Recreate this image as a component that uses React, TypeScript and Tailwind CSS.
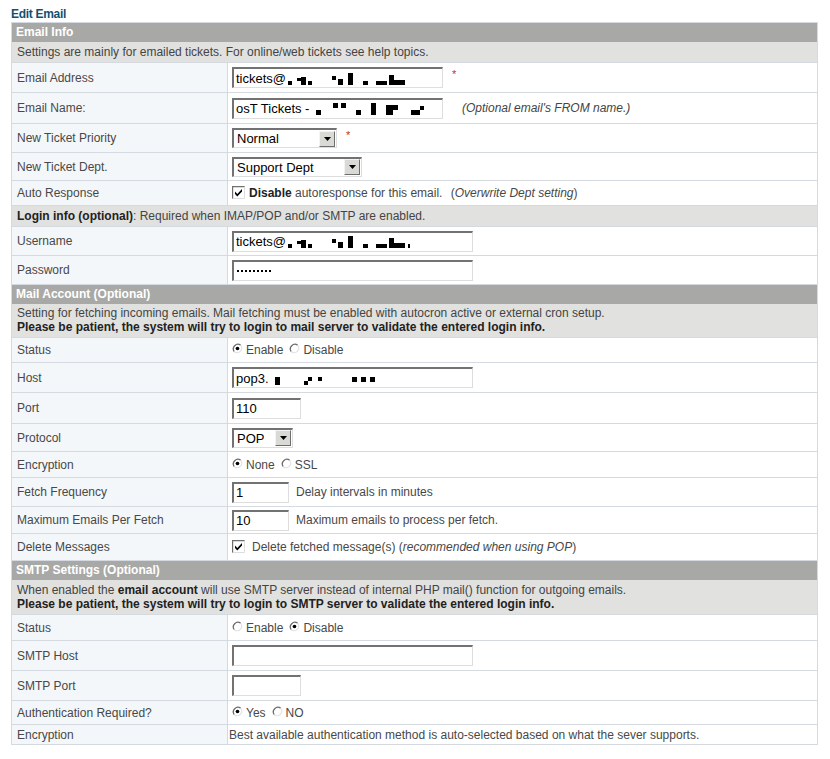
import React from 'react';

const font = "font-['Liberation_Sans',Arial,sans-serif]";

function Blocks({ items }: { items: string[] }) {
  return (
    <span className="inline-flex items-end h-[13px] ml-[1px]">
      {items.map((c, i) => (
        <span key={i} className={'inline-block bg-black ' + c} />
      ))}
    </span>
  );
}

function Input({ w, children }: { w: string; children?: React.ReactNode }) {
  return (
    <div
      className={`${w} h-[21px] flex items-center pl-[2px] bg-white border-t-2 border-l-2 border-b border-r border-t-[#727272] border-l-[#727272] border-b-[#dedede] border-r-[#dedede] text-[13px] text-black leading-none overflow-hidden whitespace-nowrap`}
    >
      {children}
    </div>
  );
}

function Select({ w, value }: { w: string; value: string }) {
  return (
    <div
      className={`${w} h-[20px] flex items-center justify-between bg-white border-t-2 border-l-2 border-b border-r border-t-[#727272] border-l-[#727272] border-b-[#dedede] border-r-[#dedede] text-[13px] text-black leading-none`}
    >
      <span className="pl-[3px]">{value}</span>
      <span className="w-[16px] h-[16px] mr-[1px] flex items-center justify-center bg-[#d9d9d6] border border-t-[#f4f4f4] border-l-[#f4f4f4] border-b-[#6e6e6e] border-r-[#6e6e6e]">
        <svg width="7" height="4" viewBox="0 0 7 4">
          <path d="M0 0h7L3.5 4z" fill="#000" />
        </svg>
      </span>
    </div>
  );
}

function Radio({ on }: { on?: boolean }) {
  return (
    <svg width="11" height="11" viewBox="0 0 12 12" className="inline-block mr-[3px] -mt-[3px]">
      <circle cx="6" cy="6" r="5" fill="#fff" />
      <path d="M9.5 2.5 A5 5 0 0 0 2.5 9.5" stroke="#6b6b6b" strokeWidth="1.4" fill="none" />
      <path d="M9.5 2.5 A5 5 0 0 1 2.5 9.5" stroke="#e2e2e2" strokeWidth="1.2" fill="none" />
      {on && <circle cx="6" cy="6" r="2" fill="#000" />}
    </svg>
  );
}

function Check() {
  return (
    <svg width="13" height="13" viewBox="0 0 13 13" className="inline-block mr-[4px] -mt-[2px]">
      <rect x="0" y="0" width="13" height="13" fill="#fff" />
      <path d="M0.5 13V0.5H13" stroke="#6f6f6f" strokeWidth="1.4" fill="none" />
      <path d="M12.5 0.5V12.5H0.5" stroke="#dedede" strokeWidth="1" fill="none" />
      <path d="M3 5.5l2.3 2.4L10 3v2.6L5.3 10.4 3 8z" fill="#000" />
    </svg>
  );
}

function Req() {
  return <span className="ml-[9px] text-[#c43030] text-[11px] -mt-[6px]">*</span>;
}

function Header({ title }: { title: string }) {
  return (
    <tr className="h-[19px] bg-[#a8a9a6]">
      <td colSpan={2} className="px-[4px] text-[12px] font-bold text-white leading-none">
        {title}
      </td>
    </tr>
  );
}

function Desc({ h, children }: { h: string; children: React.ReactNode }) {
  return (
    <tr className={`${h} bg-[#e1e1df]`}>
      <td colSpan={2} className="px-[5px] text-[12px] text-[#444] leading-[14px] border-b border-[#d4dae0]">
        {children}
      </td>
    </tr>
  );
}

function Row({ label, h, children }: { label: string; h: string; children: React.ReactNode }) {
  return (
    <tr className={h}>
      <td className="w-[216px] pl-[5px] bg-[#f4f7fa] border-r border-b border-[#d4dae0] text-[12px] text-[#484848]">
        {label}
      </td>
      <td className="pl-[4px] border-b border-[#d4dae0] text-[12px] text-[#484848]">
        <div className="flex items-center">{children}</div>
      </td>
    </tr>
  );
}

const emailBlocks = [
  'w-[4px] h-[4px] ml-[1px]',
  'w-[4px] h-[3px] ml-[5px] mb-[4px]',
  'w-[5px] h-[8px]',
  'w-[4px] h-[4px] ml-[2px]',
  'w-[4px] h-[4px] ml-[20px] mb-[5px]',
  'w-[5px] h-[6px] ml-[2px]',
  'w-[5px] h-[12px] ml-[5px]',
  'w-[5px] h-[4px] ml-[10px]',
  'w-[11px] h-[4px] ml-[8px]',
  'w-[5px] h-[10px] ml-[2px]',
  'w-[11px] h-[5px]',
];

const nameBlocks = [
  'w-[5px] h-[5px] ml-[6px]',
  'w-[5px] h-[5px] ml-[12px] mb-[7px]',
  'w-[5px] h-[5px] ml-[3px] mb-[7px]',
  'w-[5px] h-[5px] ml-[10px]',
  'w-[5px] h-[12px] ml-[10px]',
  'w-[7px] h-[10px] ml-[10px]',
  'w-[5px] h-[5px] mb-[5px]',
  'w-[9px] h-[5px] ml-[13px]',
  'w-[4px] h-[4px] mb-[5px]',
];

const hostBlocks = [
  'w-[5px] h-[8px] ml-[5px]',
  'w-[4px] h-[4px] ml-[24px]',
  'w-[4px] h-[4px] mb-[4px]',
  'w-[4px] h-[4px] ml-[6px] mb-[4px]',
  'w-[5px] h-[5px] ml-[30px] mb-[3px]',
  'w-[5px] h-[5px] ml-[4px] mb-[3px]',
  'w-[5px] h-[5px] ml-[4px] mb-[3px]',
];

export default function App() {
  return (
    <div className={`${font} bg-white w-[830px] h-[759px] pl-[11px] pt-[7px]`}>
      <div className="text-[12px] font-bold text-[#134f72] leading-[15px] tracking-[-0.3px]">Edit Email</div>
      <table className="w-[807px] border-collapse border border-[#d4dae0]">
        <tbody>
          <Header title="Email Info" />
          <Desc h="h-[21px]">Settings are mainly for emailed tickets. For online/web tickets see help topics.</Desc>
          <Row label="Email Address" h="h-[30px]">
            <Input w="w-[211px]">
              tickets@
              <Blocks items={emailBlocks} />
            </Input>
            <Req />
          </Row>
          <Row label="Email Name:" h="h-[31px]">
            <Input w="w-[211px]">
              osT Tickets -
              <Blocks items={nameBlocks} />
            </Input>
            <span className="ml-[19px] italic text-[#444]">(Optional email's FROM name.)</span>
          </Row>
          <Row label="New Ticket Priority" h="h-[29px]">
            <Select w="w-[105px]" value="Normal" />
            <Req />
          </Row>
          <Row label="New Ticket Dept." h="h-[28px]">
            <Select w="w-[130px]" value="Support Dept" />
          </Row>
          <Row label="Auto Response" h="h-[25px]">
            <Check />
            <span>
              <b className="text-[#222]">Disable</b> autoresponse for this email.{' '}
              <span className="ml-[5px]">
                (<i>Overwrite Dept setting</i>)
              </span>
            </span>
          </Row>
          <Desc h="h-[21px]">
            <b className="text-[#222]">Login info (optional)</b>: Required when IMAP/POP and/or SMTP are enabled.
          </Desc>
          <Row label="Username" h="h-[29px]">
            <Input w="w-[241px]">
              tickets@
              <Blocks items={[...emailBlocks, 'w-[2px] h-[4px] ml-[3px]']} />
            </Input>
          </Row>
          <Row label="Password" h="h-[29px]">
            <Input w="w-[241px]">
              <span className="flex gap-[2px] ml-[1px]">
                {Array.from({ length: 9 }).map((_, i) => (
                  <span key={i} className="w-[2px] h-[2px] bg-black" />
                ))}
              </span>
            </Input>
          </Row>
          <Header title="Mail Account (Optional)" />
          <Desc h="h-[34px]">
            Setting for fetching incoming emails. Mail fetching must be enabled with autocron active or external cron setup.
            <br />
            <b className="text-[#222]">Please be patient, the system will try to login to mail server to validate the entered login info.</b>
          </Desc>
          <Row label="Status" h="h-[25px]">
            <Radio on />
            <span className="mr-[6px]">Enable</span>
            <Radio />
            <span>Disable</span>
          </Row>
          <Row label="Host" h="h-[30px]">
            <Input w="w-[241px]">
              pop3.
              <Blocks items={hostBlocks} />
            </Input>
          </Row>
          <Row label="Port" h="h-[31px]">
            <Input w="w-[69px]">110</Input>
          </Row>
          <Row label="Protocol" h="h-[28px]">
            <Select w="w-[61px]" value="POP" />
          </Row>
          <Row label="Encryption" h="h-[26px]">
            <Radio on />
            <span className="mr-[6px]">None</span>
            <Radio />
            <span>SSL</span>
          </Row>
          <Row label="Fetch Frequency" h="h-[29px]">
            <Input w="w-[57px]">1</Input>
            <span className="ml-[7px]">Delay intervals in minutes</span>
          </Row>
          <Row label="Maximum Emails Per Fetch" h="h-[27px]">
            <Input w="w-[57px]">10</Input>
            <span className="ml-[7px]">Maximum emails to process per fetch.</span>
          </Row>
          <Row label="Delete Messages" h="h-[27px]">
            <Check />
            <span className="ml-[3px]">
              Delete fetched message(s) (<i>recommended when using POP</i>)
            </span>
          </Row>
          <Header title="SMTP Settings (Optional)" />
          <Desc h="h-[35px]">
            When enabled the <b className="text-[#222]">email account</b> will use SMTP server instead of internal PHP mail() function for outgoing emails.
            <br />
            <b className="text-[#222]">Please be patient, the system will try to login to SMTP server to validate the entered login info.</b>
          </Desc>
          <Row label="Status" h="h-[26px]">
            <Radio />
            <span className="mr-[6px]">Enable</span>
            <Radio on />
            <span>Disable</span>
          </Row>
          <Row label="SMTP Host" h="h-[30px]">
            <Input w="w-[241px]" />
          </Row>
          <Row label="SMTP Port" h="h-[30px]">
            <Input w="w-[69px]" />
          </Row>
          <Row label="Authentication Required?" h="h-[24px]">
            <Radio on />
            <span className="mr-[6px]">Yes</span>
            <Radio />
            <span>NO</span>
          </Row>
          <Row label="Encryption" h="h-[20px]">
            <span className="-ml-[3px]">Best available authentication method is auto-selected based on what the sever supports.</span>
          </Row>
        </tbody>
      </table>
    </div>
  );
}
